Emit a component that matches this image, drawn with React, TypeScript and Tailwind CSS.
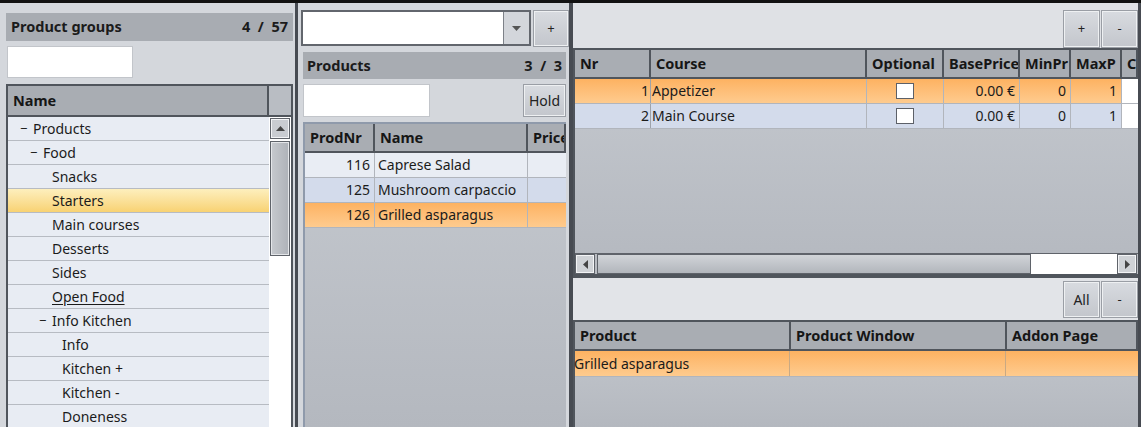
import React from 'react';

const font = { fontFamily: '"Noto Sans", "Open Sans", sans-serif' };

const treeRows = [
  { label: 'Products', pad: 'pl-[12px]', toggle: true },
  { label: 'Food', pad: 'pl-[22px]', toggle: true },
  { label: 'Snacks', pad: 'pl-[44px]' },
  { label: 'Starters', pad: 'pl-[44px]', selected: true },
  { label: 'Main courses', pad: 'pl-[44px]' },
  { label: 'Desserts', pad: 'pl-[44px]' },
  { label: 'Sides', pad: 'pl-[44px]' },
  { label: 'Open Food', pad: 'pl-[44px]', underline: true },
  { label: 'Info Kitchen', pad: 'pl-[31px]', toggle: true },
  { label: 'Info', pad: 'pl-[54px]' },
  { label: 'Kitchen +', pad: 'pl-[54px]' },
  { label: 'Kitchen -', pad: 'pl-[54px]' },
  { label: 'Doneness', pad: 'pl-[54px]' },
];

const ToolButton = ({ label, className = '' }: { label: string; className?: string }) => (
  <div
    className={`flex items-center justify-center bg-gradient-to-b from-[#d8dbe0] to-[#c3c6cc] border border-[#9a9ea5] shadow-[inset_0_0_0_1px_#eef0f2] text-[13px] text-[#222] ${className}`}
  >
    {label}
  </div>
);

const HeadCell = ({ label, className = '' }: { label: string; className?: string }) => (
  <div
    className={`flex items-center min-w-0 px-[5px] bg-[#a9adb3] border-r-2 border-b-2 border-[#50555c] font-bold text-[14.5px] text-[#161616] overflow-hidden whitespace-nowrap ${className}`}
  >
    {label}
  </div>
);

const orange = 'bg-gradient-to-b from-[#fdb261] to-[#fecb8e]';
const gridBody = 'bg-gradient-to-b from-[#c5c9cf] to-[#b4b8bf]';

const Checkbox = () => <div className="w-[18px] h-[16px] bg-white border border-[#5c6068]" />;

const App = () => {
  return (
    <div style={font} className="w-[1141px] h-[427px] overflow-hidden bg-[#d6d9de] border-t-[3px] border-[#111] flex text-[#1b1b1b]">
      {/* Product groups */}
      <div className="w-[295px] shrink-0 flex flex-col pt-[10px] pl-[6px] bg-[#d4d7dc]">
        <div className="h-[28px] mr-[2px] bg-[#a8acb2] flex items-center justify-between px-[5px] font-bold text-[14.5px]">
          <span>Product groups</span>
          <span>4&nbsp;&nbsp;/&nbsp;&nbsp;57</span>
        </div>
        <div className="mt-[5px] ml-[1px] w-[126px] h-[32px] bg-white border border-[#c2c5ca]" />
        <div className="mt-[6px] flex-1 flex border-l-2 border-t-2 border-r-2 border-[#50555c] mr-[2px] overflow-hidden">
          <div className="flex-1 min-w-0 flex flex-col">
            <div className="h-[31px] shrink-0 flex">
              <HeadCell label="Name" className="flex-1" />
            </div>
            {treeRows.map((r) => (
              <div
                key={r.label}
                className={`h-[24px] shrink-0 flex items-center border-b border-[#b7bbc2] text-[14px] ${r.pad} ${
                  r.selected ? 'bg-gradient-to-b from-[#fdefbd] to-[#f8d272]' : 'bg-[#e8ecf3]'
                }`}
              >
                {r.toggle && <span className="w-[10px] mr-[3px] text-[13px]">−</span>}
                <span className={r.underline ? 'underline underline-offset-2' : ''}>{r.label}</span>
              </div>
            ))}
          </div>
          <div className="w-[22px] shrink-0 flex flex-col bg-white">
            <div className="h-[31px] shrink-0 bg-[#b9bdc3] border-b-2 border-[#50555c]" />
            <div className="h-[21px] mx-[1px] mt-[1px] bg-[#c9ccd1] border border-[#5f636a] shadow-[inset_0_0_0_1px_#f3f4f6] flex items-center justify-center">
              <svg width="9" height="5" viewBox="0 0 9 5">
                <path d="M0 5 L4.5 0 L9 5 Z" fill="#444" />
              </svg>
            </div>
            <div className="h-[115px] mx-[1px] mt-[2px] bg-gradient-to-r from-[#c6c9ce] to-[#aeb2b8] border border-[#5f636a] shadow-[inset_0_0_0_1px_#e4e6e9]" />
          </div>
        </div>
      </div>

      <div className="w-[3px] shrink-0 bg-[#474b52]" />

      {/* Products */}
      <div className="w-[271px] shrink-0 flex flex-col pt-[7px] pl-[3px] bg-[#d4d7dc]">
        <div className="flex h-[37px]">
          <div className="w-[230px] h-[36px] flex bg-white border-2 border-[#62666d]">
            <div className="flex-1" />
            <div className="w-[26px] bg-[#d3d6db] border-l border-[#7d8188] flex items-center justify-center">
              <svg width="9" height="5" viewBox="0 0 9 5">
                <path d="M0 0 L9 0 L4.5 5 Z" fill="#555" />
              </svg>
            </div>
          </div>
          <ToolButton label="+" className="w-[36px] h-[37px] ml-[2px]" />
        </div>
        <div className="mt-[5px] ml-[2px] mr-[3px] h-[27px] bg-[#a8acb2] flex items-center justify-between px-[4px] font-bold text-[14.5px]">
          <span>Products</span>
          <span>3&nbsp;&nbsp;/&nbsp;&nbsp;3</span>
        </div>
        <div className="mt-[5px] ml-[2px] mr-[3px] h-[33px] flex justify-between">
          <div className="w-[127px] h-[33px] bg-white border border-[#c2c5ca]" />
          <ToolButton label="Hold" className="w-[43px] h-[33px] text-[14px]" />
        </div>
        <div className={`mt-[5px] ml-[2px] mr-[3px] flex-1 flex flex-col border-l-2 border-t-2 border-[#8f9aab] overflow-hidden ${gridBody}`}>
          <div className="h-[29px] shrink-0 flex">
            <HeadCell label="ProdNr" className="w-[70px] shrink-0" />
            <HeadCell label="Name" className="w-[153px] shrink-0" />
            <HeadCell label="Price" className="flex-1 border-r-0 px-[3px]" />
          </div>
          {[
            ['116', 'Caprese Salad', 'bg-[#e9edf4]'],
            ['125', 'Mushroom carpaccio', 'bg-[#d3dbeb]'],
            ['126', 'Grilled asparagus', orange],
          ].map(([nr, name, bg]) => (
            <div key={nr} className={`h-[25px] shrink-0 flex text-[14px] border-b border-[#b1b5bc] ${bg}`}>
              <div className="w-[70px] shrink-0 pr-[4px] text-right border-r border-[#b1b5bc] leading-[24px]">{nr}</div>
              <div className="w-[153px] shrink-0 pl-[3px] border-r border-[#b1b5bc] leading-[24px]">{name}</div>
              <div className="flex-1" />
            </div>
          ))}
        </div>
      </div>

      <div className="w-[4px] shrink-0 bg-[#474b52]" />

      {/* Courses */}
      <div className="w-[565px] shrink-0 overflow-hidden flex flex-col bg-[#dfe1e5]">
        <div className="h-[45px] shrink-0 flex justify-end pt-[7px]">
          <ToolButton label="+" className="w-[37px] h-[38px]" />
          <ToolButton label="-" className="w-[37px] h-[38px] ml-[1px]" />
        </div>
        <div className={`h-[226px] shrink-0 flex flex-col border-t-2 border-l-2 border-[#50555c] ${gridBody}`}>
          <div className="h-[29px] shrink-0 flex">
            <HeadCell label="Nr" className="w-[76px] shrink-0" />
            <HeadCell label="Course" className="w-[216px] shrink-0" />
            <HeadCell label="Optional" className="w-[77px] shrink-0" />
            <HeadCell label="BasePrice" className="w-[76px] shrink-0 px-[3px]" />
            <HeadCell label="MinPr" className="w-[51px] shrink-0 px-[3px]" />
            <HeadCell label="MaxP" className="w-[51px] shrink-0 px-[3px]" />
            <HeadCell label="Co" className="flex-1 border-r-0 px-[3px]" />
          </div>
          {[
            ['1', 'Appetizer', orange],
            ['2', 'Main Course', 'bg-[#d3dbeb]'],
          ].map(([nr, name, bg]) => (
            <div key={nr} className={`h-[25px] shrink-0 flex text-[14px] border-b border-[#b1b5bc] ${bg}`}>
              <div className="w-[76px] shrink-0 pr-[1px] text-right border-r border-[#9ea3aa] leading-[24px]">{nr}</div>
              <div className="w-[216px] shrink-0 pl-[1px] border-r border-[#b1b5bc] leading-[24px]">{name}</div>
              <div className="w-[77px] shrink-0 border-r border-[#b1b5bc] flex items-center justify-center">
                <Checkbox />
              </div>
              <div className="w-[76px] shrink-0 pr-[4px] text-right border-r border-[#b1b5bc] leading-[24px]">0.00 €</div>
              <div className="w-[51px] shrink-0 pr-[4px] text-right border-r border-[#b1b5bc] leading-[24px]">0</div>
              <div className="w-[51px] shrink-0 pr-[4px] text-right border-r border-[#b1b5bc] leading-[24px]">1</div>
              <div className="flex-1 bg-white" />
            </div>
          ))}
          <div className="flex-1" />
          <div className="h-[21px] shrink-0 flex items-stretch bg-[#b9bcc2] border-t border-[#5f636a] pr-[1px]">
            <div className="w-[20px] bg-[#cfd2d6] border border-[#5f636a] shadow-[inset_0_0_0_1px_#f3f4f6] flex items-center justify-center">
              <svg width="5" height="9" viewBox="0 0 5 9">
                <path d="M5 0 L0 4.5 L5 9 Z" fill="#444" />
              </svg>
            </div>
            <div className="w-[434px] ml-[2px] bg-gradient-to-b from-[#d1d4d8] to-[#b2b6bc] border border-[#5f636a]" />
            <div className="flex-1 bg-white" />
            <div className="w-[20px] bg-[#cfd2d6] border border-[#5f636a] shadow-[inset_0_0_0_1px_#f3f4f6] flex items-center justify-center">
              <svg width="5" height="9" viewBox="0 0 5 9">
                <path d="M0 0 L5 4.5 L0 9 Z" fill="#444" />
              </svg>
            </div>
          </div>
        </div>
        <div className="h-[4px] shrink-0 bg-[#50555c]" />
        <div className="h-[42px] shrink-0 flex justify-end items-start pt-[3px] bg-[#e2e4e8]">
          <ToolButton label="All" className="w-[37px] h-[37px] text-[14px]" />
          <ToolButton label="-" className="w-[37px] h-[37px] ml-[1px]" />
        </div>
        <div className={`flex-1 flex flex-col border-t-2 border-l-2 border-[#50555c] ${gridBody}`}>
          <div className="h-[29px] shrink-0 flex">
            <HeadCell label="Product" className="w-[216px] shrink-0" />
            <HeadCell label="Product Window" className="w-[216px] shrink-0" />
            <HeadCell label="Addon Page" className="flex-1 border-r-0" />
          </div>
          <div className={`h-[26px] shrink-0 flex text-[14px] border-b border-[#b1b5bc] ${orange}`}>
            <div className="w-[216px] shrink-0 border-r border-[#c9a983] leading-[25px] -ml-[1px]">Grilled asparagus</div>
            <div className="w-[216px] shrink-0 border-r border-[#c9a983]" />
            <div className="flex-1" />
          </div>
        </div>
      </div>
      <div className="w-[3px] shrink-0 bg-[#474b52]" />
    </div>
  );
};

export default App;
